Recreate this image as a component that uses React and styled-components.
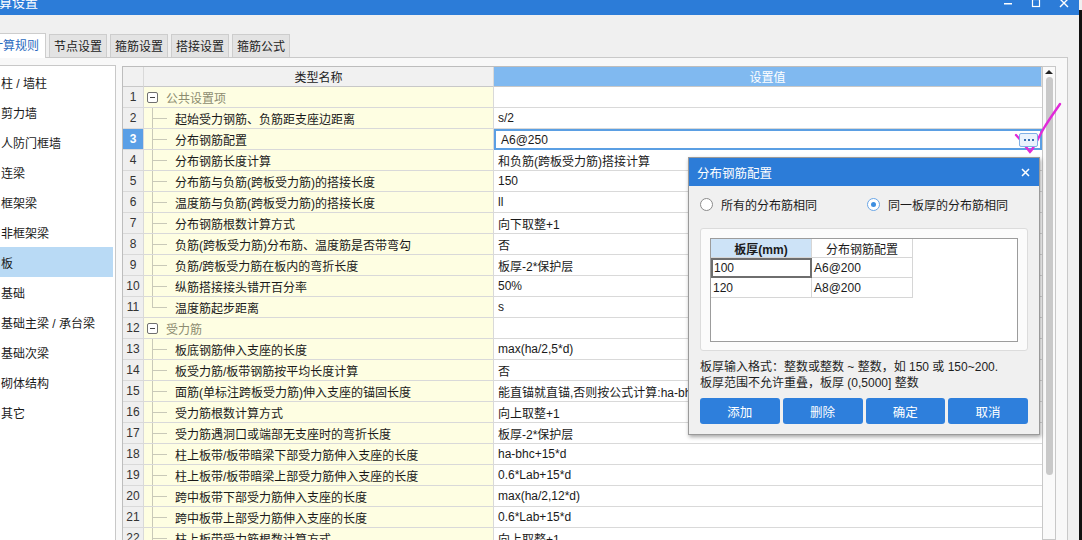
import React from "react";
import styled, { createGlobalStyle } from "styled-components";

const GlobalStyle = createGlobalStyle`
  html, body { margin: 0; padding: 0; background: #f0f0f0; overflow: hidden; }
  body {
    font-family: "Liberation Sans", "Noto Sans CJK SC", sans-serif;
    font-size: 12px;
    color: #1a1a1a;
  }
`;

const Screen = styled.div`
  position: relative;
  width: 1082px;
  height: 540px;
  overflow: hidden;
  display: flex;
`;

const AppWindow = styled.div`
  width: 1079px;
  display: flex;
  flex-direction: column;
  background: #f0f0f0;
`;

const Edge = styled.div`
  width: 3px;
  margin-top: 10px;
  background: #111;
`;

const TitleBar = styled.div`
  height: 30px;
  margin-top: -15px;
  flex: none;
  background: #2c7cd8;
  color: #fff;
  display: flex;
  align-items: flex-end;
  justify-content: space-between;
  padding: 0 10px 0 0;
  box-sizing: border-box;
`;

const Title = styled.div`
  margin: 0 0 5px -14px;
  font-size: 13px;
  line-height: 14px;
`;

const Controls = styled.div`
  display: flex;
  gap: 18px;
  margin-bottom: 7px;
  align-items: flex-end;
`;

const TabStrip = styled.div`
  height: 42px;
  flex: none;
  display: flex;
  align-items: flex-end;
  gap: 3px;
  margin-left: -16px;
`;

const Tab = styled.div`
  width: ${(p) => (p.$active ? "62px" : "58px")};
  height: ${(p) => (p.$active ? "25px" : "23px")};
  margin-bottom: ${(p) => (p.$active ? "-1px" : "0")};
  z-index: ${(p) => (p.$active ? 1 : 0)};
  box-sizing: border-box;
  display: flex;
  align-items: center;
  justify-content: center;
  padding-bottom: ${(p) => (p.$active ? "4px" : "2px")};
  font-size: 12px;
  border: 1px solid #cdcdcd;
  border-bottom: none;
  background: ${(p) => (p.$active ? "#fff" : "#e3e3e3")};
  color: ${(p) => (p.$active ? "#2a6bc0" : "#222")};
`;

const Panel = styled.div`
  flex: 1;
  min-height: 0;
  width: 1068px;
  box-sizing: border-box;
  display: flex;
  gap: 6px;
  padding-top: 7px;
  border-top: 1px solid #c9c9c9;
  border-right: 1px solid #c9c9c9;
  background: #f8f8f8;
`;

const Sidebar = styled.div`
  width: 116px;
  flex: none;
  box-sizing: border-box;
  background: #fff;
  border: 1px solid #c8c8c8;
  border-left: none;
  border-bottom: none;
  padding-top: 1px;
`;

const SideItem = styled.div`
  height: 30px;
  margin-right: 2px;
  display: flex;
  align-items: center;
  padding-left: 1px;
  font-size: 12px;
  background: ${(p) => (p.$active ? "#b9daf5" : "transparent")};
`;

const TableArea = styled.div`
  margin-top: 1px;
  display: flex;
  align-items: stretch;
`;

const Grid = styled.div`
  width: 920px;
  box-sizing: border-box;
  border: 1px solid #bdbdbd;
  border-right: none;
  border-bottom: none;
  background: #fff;
  display: grid;
  grid-template-columns: 21px 350px 1fr;
  grid-template-rows: 20px;
  grid-auto-rows: 21px;
  align-content: start;
`;

const Cell = styled.div`
  box-sizing: border-box;
  display: flex;
  align-items: center;
  white-space: nowrap;
  overflow: hidden;
  border-bottom: 1px solid #d9d9d9;
  border-right: 1px solid #d9d9d9;
`;

const HeadCell = styled(Cell)`
  justify-content: center;
  font-size: 12px;
  background: ${(p) => (p.$blue ? "#80b9f0" : "#f1f1f1")};
  color: ${(p) => (p.$blue ? "#fff" : "#222")};
  border-bottom-color: #c8c8c8;
`;

const NumCell = styled(Cell)`
  justify-content: center;
  font-size: 12px;
  background: ${(p) => (p.$active ? "#5a9fe6" : "#efefef")};
  color: ${(p) => (p.$active ? "#fff" : "#333")};
  font-weight: ${(p) => (p.$active ? "bold" : "normal")};
`;

const NameCell = styled(Cell)`
  background-color: #fefee2;
  background-image: ${(p) =>
    p.$group
      ? "none"
      : "linear-gradient(to right, transparent 8px, #c9c9b8 8px, #c9c9b8 9px, transparent 9px)"};
  background-repeat: no-repeat;
  background-size: 100% ${(p) => (p.$last ? "50%" : "100%")};
  padding-left: ${(p) => (p.$group ? "3px" : "8px")};
`;

const Branch = styled.span`
  width: 15px;
  height: 1px;
  background: #c9c9b8;
  margin-right: 8px;
  flex: none;
`;

const MinusBox = styled.span`
  width: 9px;
  height: 9px;
  border: 1px solid #707070;
  border-radius: 2px;
  background: #fff;
  margin-right: 8px;
  display: flex;
  align-items: center;
  justify-content: center;
  flex: none;
  &::after {
    content: "";
    width: 5px;
    height: 1px;
    background: #444;
  }
`;

const GroupText = styled.span`
  color: #8d8c70;
`;

const ValueCell = styled(Cell)`
  padding-left: 4px;
  border-right: none;
`;

const EditCell = styled(Cell)`
  border: 2px solid #5b9fe3;
  padding: 0 2px 0 5px;
  justify-content: space-between;
`;

const DotsButton = styled.span`
  width: 19px;
  height: 14px;
  box-sizing: border-box;
  border: 1px solid #7fb0e6;
  border-radius: 2px;
  background: #eaf3fd;
  display: flex;
  align-items: center;
  justify-content: center;
  gap: 2px;
  position: relative;
  z-index: 2;
`;

const Dot = styled.span`
  width: 2px;
  height: 2px;
  background: #3a6fb0;
`;

const ScrollBar = styled.div`
  width: 14px;
  box-sizing: border-box;
  border: 1px solid #c8c8c8;
  background: #fafafa;
  display: flex;
  flex-direction: column;
  align-items: center;
  padding-top: 2px;
`;

const ScrollThumb = styled.div`
  width: 7px;
  height: 398px;
  margin-top: 2px;
  border-radius: 4px;
  background: #c9c9c9;
`;

const Dialog = styled.div`
  position: absolute;
  left: 688px;
  top: 157px;
  width: 352px;
  height: 278px;
  box-sizing: border-box;
  background: #f0f0f0;
  border: 1px solid #9a9a9a;
  box-shadow: 1px 2px 4px rgba(0, 0, 0, 0.35);
  display: flex;
  flex-direction: column;
  font-family: "Noto Sans CJK SC", "Liberation Sans", sans-serif;
`;

const DialogTitle = styled.div`
  height: 28px;
  background: #2c7cd8;
  color: #fff;
  display: flex;
  align-items: center;
  justify-content: space-between;
  padding: 0 9px 0 8px;
  font-size: 12.5px;
`;

const DialogBody = styled.div`
  padding: 8px 11px 0 11px;
  display: flex;
  flex-direction: column;
`;

const RadioRow = styled.div`
  height: 20px;
  display: flex;
  align-items: center;
`;

const RadioLabel = styled.label`
  display: flex;
  align-items: center;
  gap: 8px;
  font-size: 12px;
  width: ${(p) => p.$w}px;
`;

const RadioCircle = styled.span`
  width: 13px;
  height: 13px;
  box-sizing: border-box;
  border-radius: 50%;
  border: 1px solid ${(p) => (p.$on ? "#6aa6e6" : "#8b8b8b")};
  background: #fff;
  display: flex;
  align-items: center;
  justify-content: center;
  &::after {
    content: "";
    width: 5px;
    height: 5px;
    border-radius: 50%;
    background: ${(p) => (p.$on ? "#3d8ee0" : "transparent")};
  }
`;

const GroupBox = styled.div`
  margin-top: 14px;
  height: 123px;
  box-sizing: border-box;
  border: 1px solid #dcdcdc;
  border-radius: 3px;
  background: #fbfbfb;
  padding: 9px 9px 8px 9px;
`;

const MiniGrid = styled.div`
  height: 100%;
  box-sizing: border-box;
  border: 1px solid #9c9c9c;
  background: #fff;
  display: grid;
  grid-template-columns: 101px 101px;
  grid-template-rows: 19px;
  grid-auto-rows: 20px;
  align-content: start;
`;

const MiniCell = styled.div`
  box-sizing: border-box;
  display: flex;
  align-items: center;
  justify-content: ${(p) => (p.$head ? "center" : "flex-start")};
  padding-left: ${(p) => (p.$head ? "0" : "2px")};
  font-family: "Liberation Sans", "Noto Sans CJK SC", sans-serif;
  font-size: 12px;
  font-weight: ${(p) => (p.$bold ? "bold" : "normal")};
  background: ${(p) => (p.$blue ? "#cde3f7" : "#fff")};
  border-right: 1px solid #d6d6d6;
  border-bottom: 1px solid #d6d6d6;
  ${(p) => p.$focus && "border: 2px solid #6e6e6e; padding-left: 1px;"}
`;

const Note = styled.div`
  margin-top: 8px;
  font-size: 12px;
  line-height: 16px;
  color: #1e1e1e;
  font-family: "Liberation Sans", "Noto Sans CJK SC", sans-serif;
`;

const ButtonRow = styled.div`
  margin-top: 7px;
  display: flex;
  gap: 3px;
`;

const Button = styled.button`
  width: 80px;
  height: 26px;
  border: none;
  border-radius: 3px;
  background: #2e7fdc;
  color: #fff;
  font-family: "Noto Sans CJK SC", sans-serif;
  font-size: 12.5px;
  padding: 0;
`;

const Annotation = styled.svg`
  position: absolute;
  left: 1010px;
  top: 98px;
  pointer-events: none;
`;

const menu = [
  "柱 / 墙柱",
  "剪力墙",
  "人防门框墙",
  "连梁",
  "框架梁",
  "非框架梁",
  "板",
  "基础",
  "基础主梁 / 承台梁",
  "基础次梁",
  "砌体结构",
  "其它",
];

const rows = [
  { name: "公共设置项", group: true },
  { name: "起始受力钢筋、负筋距支座边距离", value: "s/2" },
  { name: "分布钢筋配置", value: "A6@250", edit: true },
  { name: "分布钢筋长度计算", value: "和负筋(跨板受力筋)搭接计算" },
  { name: "分布筋与负筋(跨板受力筋)的搭接长度", value: "150" },
  { name: "温度筋与负筋(跨板受力筋)的搭接长度", value: "ll" },
  { name: "分布钢筋根数计算方式", value: "向下取整+1" },
  { name: "负筋(跨板受力筋)分布筋、温度筋是否带弯勾", value: "否" },
  { name: "负筋/跨板受力筋在板内的弯折长度", value: "板厚-2*保护层" },
  { name: "纵筋搭接接头错开百分率", value: "50%" },
  { name: "温度筋起步距离", value: "s", last: true },
  { name: "受力筋", group: true },
  { name: "板底钢筋伸入支座的长度", value: "max(ha/2,5*d)" },
  { name: "板受力筋/板带钢筋按平均长度计算", value: "否" },
  { name: "面筋(单标注跨板受力筋)伸入支座的锚固长度", value: "能直锚就直锚,否则按公式计算:ha-bhc+15*d" },
  { name: "受力筋根数计算方式", value: "向上取整+1" },
  { name: "受力筋遇洞口或端部无支座时的弯折长度", value: "板厚-2*保护层" },
  { name: "柱上板带/板带暗梁下部受力筋伸入支座的长度", value: "ha-bhc+15*d" },
  { name: "柱上板带/板带暗梁上部受力筋伸入支座的长度", value: "0.6*Lab+15*d" },
  { name: "跨中板带下部受力筋伸入支座的长度", value: "max(ha/2,12*d)" },
  { name: "跨中板带上部受力筋伸入支座的长度", value: "0.6*Lab+15*d" },
  { name: "柱上板带受力筋根数计算方式", value: "向上取整+1" },
];

export default function App() {
  return (
    <Screen>
      <GlobalStyle />
      <AppWindow>
        <TitleBar>
          <Title>计算设置</Title>
          <Controls>
            <svg width="10" height="10" viewBox="0 0 10 10">
              <rect x="1" y="5" width="8" height="1.5" fill="#fff" />
            </svg>
            <svg width="10" height="10" viewBox="0 0 10 10">
              <rect x="1.5" y="1.5" width="7" height="7" fill="none" stroke="#fff" strokeWidth="1.2" />
            </svg>
            <svg width="10" height="10" viewBox="0 0 10 10">
              <path d="M1 1 L9 9 M9 1 L1 9" stroke="#fff" strokeWidth="1.4" />
            </svg>
          </Controls>
        </TitleBar>

        <TabStrip>
          <Tab $active>计算规则</Tab>
          <Tab>节点设置</Tab>
          <Tab>箍筋设置</Tab>
          <Tab>搭接设置</Tab>
          <Tab>箍筋公式</Tab>
        </TabStrip>

        <Panel>
          <Sidebar>
            {menu.map((m) => (
              <SideItem key={m} $active={m === "板"}>
                {m}
              </SideItem>
            ))}
          </Sidebar>

          <TableArea>
            <Grid>
              <HeadCell />
              <HeadCell>类型名称</HeadCell>
              <HeadCell $blue>设置值</HeadCell>
              {rows.map((r, i) => (
                <React.Fragment key={i}>
                  <NumCell $active={r.edit}>{i + 1}</NumCell>
                  <NameCell $group={r.group} $last={r.last}>
                    {r.group ? (
                      <>
                        <MinusBox />
                        <GroupText>{r.name}</GroupText>
                      </>
                    ) : (
                      <>
                        <Branch />
                        {r.name}
                      </>
                    )}
                  </NameCell>
                  {r.edit ? (
                    <EditCell>
                      {r.value}
                      <DotsButton>
                        <Dot />
                        <Dot />
                        <Dot />
                      </DotsButton>
                    </EditCell>
                  ) : (
                    <ValueCell>{r.value}</ValueCell>
                  )}
                </React.Fragment>
              ))}
            </Grid>
            <ScrollBar>
              <svg width="8" height="6" viewBox="0 0 8 6">
                <path d="M0 5 L4 1 L8 5 Z" fill="#222" />
              </svg>
              <ScrollThumb />
            </ScrollBar>
          </TableArea>
        </Panel>
      </AppWindow>
      <Edge />

      <Dialog>
        <DialogTitle>
          <span>分布钢筋配置</span>
          <svg width="9" height="9" viewBox="0 0 9 9">
            <path d="M1 1 L8 8 M8 1 L1 8" stroke="#fff" strokeWidth="1.5" />
          </svg>
        </DialogTitle>
        <DialogBody>
          <RadioRow>
            <RadioLabel $w={167}>
              <RadioCircle />
              所有的分布筋相同
            </RadioLabel>
            <RadioLabel $w={160}>
              <RadioCircle $on />
              同一板厚的分布筋相同
            </RadioLabel>
          </RadioRow>
          <GroupBox>
            <MiniGrid>
              <MiniCell $head $blue $bold>板厚(mm)</MiniCell>
              <MiniCell $head>分布钢筋配置</MiniCell>
              <MiniCell $focus>100</MiniCell>
              <MiniCell>A6@200</MiniCell>
              <MiniCell>120</MiniCell>
              <MiniCell>A8@200</MiniCell>
            </MiniGrid>
          </GroupBox>
          <Note>
            板厚输入格式：整数或整数 ~ 整数，如 150 或 150~200.
            <br />
            板厚范围不允许重叠，板厚 (0,5000] 整数
          </Note>
          <ButtonRow>
            <Button>添加</Button>
            <Button>删除</Button>
            <Button>确定</Button>
            <Button>取消</Button>
          </ButtonRow>
        </DialogBody>
      </Dialog>

      <Annotation width="60" height="62" viewBox="0 0 60 62">
        <path
          d="M6 37 C11 42 15 48 20 54 C24 50 28 40 34 30 C40 20 46 12 50 6"
          fill="none"
          stroke="#e12ad9"
          strokeWidth="2.4"
          strokeLinecap="round"
        />
      </Annotation>
    </Screen>
  );
}
